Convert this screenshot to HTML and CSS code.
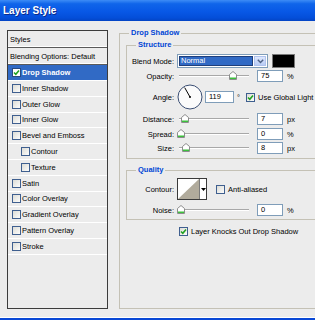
FILE: index.html
```html
<!DOCTYPE html>
<html>
<head>
<meta charset="utf-8">
<link rel="stylesheet" href="styles.css">
</head>
<body>
<div class="titlebar">Layer Style</div>
<div class="content">
  <div class="styles-panel">
    <div class="panel-head">Styles</div>
    <div class="panel-head">Blending Options: Default</div>
    <ul class="style-list">
      <li class="selected"><span class="cb"><svg width="7" height="7" viewBox="0 0 7 7"><path d="M1 3.5 L2.8 5.3 L6 1.5" fill="none" stroke="#21a121" stroke-width="1.6"/></svg></span>Drop Shadow</li>
      <li><span class="cb"></span>Inner Shadow</li>
      <li><span class="cb"></span>Outer Glow</li>
      <li><span class="cb"></span>Inner Glow</li>
      <li><span class="cb"></span>Bevel and Emboss</li>
      <li class="sub-item"><span class="cb"></span>Contour</li>
      <li class="sub-item"><span class="cb"></span>Texture</li>
      <li><span class="cb"></span>Satin</li>
      <li><span class="cb"></span>Color Overlay</li>
      <li><span class="cb"></span>Gradient Overlay</li>
      <li><span class="cb"></span>Pattern Overlay</li>
      <li><span class="cb"></span>Stroke</li>
    </ul>
  </div>

  <fieldset class="group main">
    <legend>Drop Shadow</legend>
    <fieldset class="group sub">
      <legend>Structure</legend>
      <div class="row row-blend">
        <span class="label">Blend Mode:</span>
        <div class="select">
          <span class="select-value">Normal</span>
          <span class="select-btn"><svg width="7" height="5" viewBox="0 0 7 5"><path d="M0.8 0.8 L3.5 3.6 L6.2 0.8" fill="none" stroke="#4d6185" stroke-width="1.4"/></svg></span>
        </div>
        <span class="swatch"></span>
      </div>
      <div class="row row-opacity">
        <span class="label">Opacity:</span>
        <div class="slider"><span class="track"></span><span class="thumb" style="left:52px"><svg width="8" height="9" viewBox="0 0 8 9"><path d="M0.5 3.5 L4 0.5 L7.5 3.5 V8.5 H0.5 Z" fill="#fff" stroke="#8c8c8c"/><rect x="1" y="6.5" width="6" height="1.5" fill="#3cc03c"/></svg></span></div>
        <span class="num">75</span><span class="unit">%</span>
      </div>
      <div class="row row-angle">
        <span class="label">Angle:</span>
        <svg class="dial" width="26" height="26" viewBox="0 0 26 26"><circle cx="13" cy="13" r="12" fill="#fbfbfb" stroke="#3b4f74" stroke-width="1"/><line x1="13" y1="13" x2="7.7" y2="3.6" stroke="#000" stroke-width="1"/><circle cx="13" cy="13" r="1" fill="#000"/></svg>
        <span class="num num-angle">119</span><span class="deg">°</span>
        <span class="cb cb-global"><svg width="7" height="7" viewBox="0 0 7 7"><path d="M1 3.5 L2.8 5.3 L6 1.5" fill="none" stroke="#21a121" stroke-width="1.6"/></svg></span><span class="cb-text">Use Global Light</span>
      </div>
      <div class="row row-distance">
        <span class="label">Distance:</span>
        <div class="slider"><span class="track"></span><span class="thumb" style="left:4px"><svg width="8" height="9" viewBox="0 0 8 9"><path d="M0.5 3.5 L4 0.5 L7.5 3.5 V8.5 H0.5 Z" fill="#fff" stroke="#8c8c8c"/><rect x="1" y="6.5" width="6" height="1.5" fill="#3cc03c"/></svg></span></div>
        <span class="num">7</span><span class="unit">px</span>
      </div>
      <div class="row row-spread">
        <span class="label">Spread:</span>
        <div class="slider"><span class="track"></span><span class="thumb" style="left:0px"><svg width="8" height="9" viewBox="0 0 8 9"><path d="M0.5 3.5 L4 0.5 L7.5 3.5 V8.5 H0.5 Z" fill="#fff" stroke="#8c8c8c"/><rect x="1" y="6.5" width="6" height="1.5" fill="#3cc03c"/></svg></span></div>
        <span class="num">0</span><span class="unit">%</span>
      </div>
      <div class="row row-size">
        <span class="label">Size:</span>
        <div class="slider"><span class="track"></span><span class="thumb" style="left:5px"><svg width="8" height="9" viewBox="0 0 8 9"><path d="M0.5 3.5 L4 0.5 L7.5 3.5 V8.5 H0.5 Z" fill="#fff" stroke="#8c8c8c"/><rect x="1" y="6.5" width="6" height="1.5" fill="#3cc03c"/></svg></span></div>
        <span class="num">8</span><span class="unit">px</span>
      </div>
    </fieldset>

    <fieldset class="group sub quality">
      <legend>Quality</legend>
      <div class="row row-contour">
        <span class="label">Contour:</span>
        <div class="contour">
          <svg class="contour-graph" width="21" height="20" viewBox="0 0 21 20"><rect width="21" height="20" fill="#fff"/><path d="M0 20 L21 0 L21 20 Z" fill="#b1ab9c"/></svg>
          <span class="contour-arrow"><svg width="5" height="3" viewBox="0 0 5 3"><path d="M0 0 H5 L2.5 3 Z" fill="#000"/></svg></span>
        </div>
        <span class="cb cb-anti"></span><span class="cb-text">Anti-aliased</span>
      </div>
      <div class="row row-noise">
        <span class="label">Noise:</span>
        <div class="slider"><span class="track"></span><span class="thumb" style="left:0px"><svg width="8" height="9" viewBox="0 0 8 9"><path d="M0.5 3.5 L4 0.5 L7.5 3.5 V8.5 H0.5 Z" fill="#fff" stroke="#8c8c8c"/><rect x="1" y="6.5" width="6" height="1.5" fill="#3cc03c"/></svg></span></div>
        <span class="num">0</span><span class="unit">%</span>
      </div>
    </fieldset>

    <div class="knockout">
      <span class="cb"><svg width="7" height="7" viewBox="0 0 7 7"><path d="M1 3.5 L2.8 5.3 L6 1.5" fill="none" stroke="#21a121" stroke-width="1.6"/></svg></span><span class="cb-text">Layer Knocks Out Drop Shadow</span>
    </div>
  </fieldset>
</div>
<div class="bottom-edge"></div>
</body>
</html>
```

FILE: styles.css
```css
* { box-sizing: border-box; }
html, body { margin: 0; padding: 0; }
body {
  width: 315px;
  height: 320px;
  overflow: hidden;
  background: #ececec;
  font-family: "Liberation Sans", Arial, sans-serif;
  font-size: 7.5px;
  color: #000;
}

.titlebar {
  height: 21px;
  display: flex;
  align-items: center;
  padding-left: 3px;
  color: #fff;
  font-weight: bold;
  font-size: 10px;
  text-shadow: 1px 1px 0 #0b2a8a;
  background: linear-gradient(to bottom, #3d8cf6 0%, #1065ea 18%, #0858e6 55%, #044ed9 85%, #0444c4 100%);
}

.content {
  height: 296px;
  display: flex;
  align-items: flex-start;
  overflow: hidden;
}

.bottom-edge {
  height: 3px;
  border-top: 1px solid #fff;
  background: #0a48d6;
}

/* Styles list */
.styles-panel {
  flex-shrink: 0;
  margin: 9px 0 0 7px;
  width: 101px;
  height: 279px;
  border: 1px solid #3c3c3c;
}
.panel-head {
  height: 17px;
  border-bottom: 1px solid #5a5a5a;
  box-shadow: inset 0 -1px 0 #fff;
  padding-left: 2px;
  display: flex;
  align-items: center;
  white-space: nowrap;
}
.style-list {
  list-style: none;
  margin: 0;
  padding: 0;
}
.style-list li {
  height: 15.8px;
  display: flex;
  align-items: center;
  padding-left: 4px;
  border-bottom: 1px solid #fff;
  white-space: nowrap;
}
.style-list li.selected {
  background: #316ac5;
  color: #fff;
  font-weight: bold;
  height: 16px;
}
.style-list li.sub-item { padding-left: 13px; }

.cb {
  flex-shrink: 0;
  width: 9px;
  height: 9px;
  margin-right: 1px;
  border: 1px solid #3f5f8f;
  background: linear-gradient(135deg, #dcdcd6, #fcfcfb);
  display: flex;
  align-items: center;
  justify-content: center;
}
.selected .cb { background: #fff; border-color: #2a4a80; }
.cb-text { margin-left: 2px; white-space: nowrap; }

/* Group boxes (right edge runs off the visible dialog area) */
.group {
  margin: 0;
  padding: 0;
  min-width: 0;
  border: 1px solid #c4c1b5;
  border-right: none;
}
.group > legend {
  padding: 0 2px;
  line-height: 10px;
  font-weight: bold;
  color: #0046d5;
  white-space: nowrap;
}
.main {
  flex-shrink: 0;
  margin: 7px 0 0 11px;
  width: 196px;
  height: 281px;
  padding: 2px 0 0 6px;
}
.main > legend { margin-left: 3px; }
.sub { padding: 4px 0 4px 0; }
.sub > legend { margin-left: 9px; }
.quality { margin-top: 6px; padding: 3px 0 3px 0; }

/* Rows */
.row {
  display: flex;
  align-items: center;
  height: 12px;
  white-space: nowrap;
}
.row-blend { height: 14px; }
.row-opacity { margin-top: 2px; }
.row-angle { height: 26px; margin-top: 2px; }
.row-distance { margin-top: 3px; }
.row-spread { margin-top: 3px; }
.row-size { margin-top: 2px; }
.row-contour { height: 22px; }
.row-noise { margin-top: 4px; }

.label {
  flex-shrink: 0;
  width: 47px;
  margin-right: 3px;
  text-align: right;
}

.select {
  flex-shrink: 0;
  width: 91px;
  height: 14px;
  border: 1px solid #7f9db9;
  background: #fff;
  padding: 1px;
  display: flex;
}
.select-value {
  flex: 1;
  background: #316ac5;
  color: #fff;
  border: 1px solid #203f7a;
  padding-left: 1px;
  line-height: 8px;
}
.select-btn {
  width: 12px;
  margin-left: 1px;
  background: linear-gradient(#dfe8fd, #b8ccf5);
  border: 1px solid #b0c3ee;
  display: flex;
  align-items: center;
  justify-content: center;
}
.swatch {
  flex-shrink: 0;
  width: 23px;
  height: 14px;
  margin-left: 4px;
  background: #000;
  border: 1px solid #7a7a7a;
}

.slider {
  flex-shrink: 0;
  position: relative;
  width: 74px;
  height: 10px;
  margin-right: 6px;
  padding: 0 2px;
  display: flex;
  align-items: center;
}
.track {
  flex: 1;
  height: 2px;
  border-top: 1px solid #a8a8a8;
  border-bottom: 1px solid #fff;
}
.thumb {
  position: absolute;
  top: 0;
  width: 8px;
  height: 9px;
  display: block;
}
.thumb svg { display: block; }

.num {
  flex-shrink: 0;
  width: 26px;
  height: 12px;
  border: 1px solid #7f9db9;
  background: #fff;
  padding-left: 3px;
  line-height: 10px;
}
.unit { margin-left: 4px; }

.dial { flex-shrink: 0; display: block; margin-right: 2px; }
.num-angle { width: 29px; }
.deg { margin-left: 3px; margin-right: 6px; }

.contour {
  flex-shrink: 0;
  width: 30px;
  height: 22px;
  border: 1px solid #3a3a3a;
  display: flex;
}
.contour-graph { display: block; }
.contour-arrow {
  flex: 1;
  border-left: 1px solid #7a7a7a;
  background: #fff;
  display: flex;
  align-items: center;
  justify-content: center;
}
.cb-anti { margin-left: 9px; }

.knockout {
  display: flex;
  align-items: center;
  height: 10px;
  margin: 6px 0 0 53px;
}
```
